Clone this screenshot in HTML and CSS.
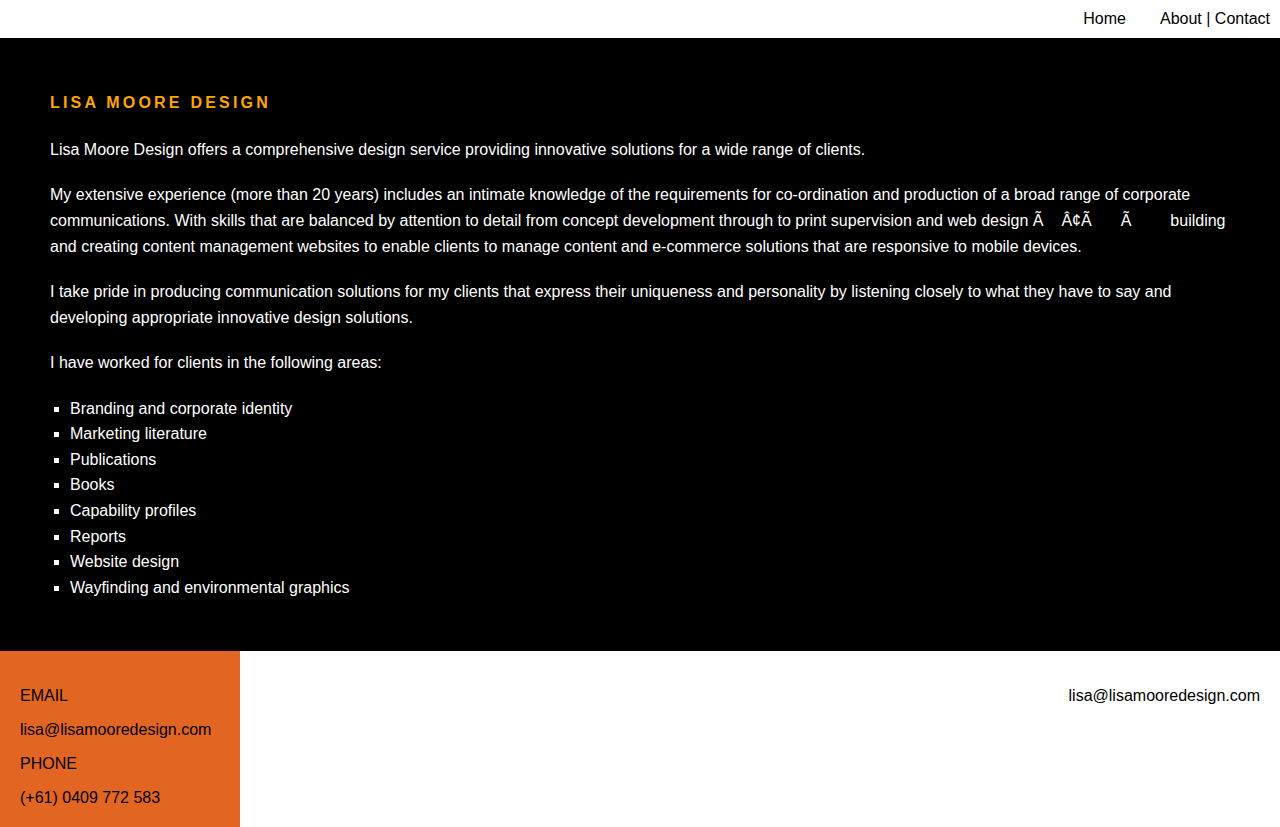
FILE: index.html
```html
<!DOCTYPE html>
<html lang="en">
<head>
<meta charset="utf-8">
<title>Lisa Moore Design</title>
<link rel="stylesheet" href="styles.css">
</head>
<body>
<header class="topbar">
  <nav class="nav">
    <a href="#">Home</a>
    <a href="#">About | Contact</a>
  </nav>
</header>
<main class="about">
  <h1 class="title">LISA MOORE DESIGN</h1>
  <p>Lisa Moore Design offers a comprehensive design service providing innovative solutions for a wide range of clients.</p>
  <p>My extensive experience (more than 20 years) includes an intimate knowledge of the requirements for co-ordination and production of a broad range of corporate communications. With skills that are balanced by attention to detail from concept development through to print supervision and web design Ã<span class="gap g1"></span>Â¢Ã<span class="gap g2"></span>Ã<span class="gap g3"></span>building and creating content management websites to enable clients to manage content and e-commerce solutions that are responsive to mobile devices.</p>
  <p>I take pride in producing communication solutions for my clients that express their uniqueness and personality by listening closely to what they have to say and developing appropriate innovative design solutions.</p>
  <p class="lead">I have worked for clients in the following areas:</p>
  <ul class="areas">
    <li>Branding and corporate identity</li>
    <li>Marketing literature</li>
    <li>Publications</li>
    <li>Books</li>
    <li>Capability profiles</li>
    <li>Reports</li>
    <li>Website design</li>
    <li>Wayfinding and environmental graphics</li>
  </ul>
</main>
<footer class="footer">
  <div class="contact">
    <div>EMAIL</div>
    <div>lisa@lisamooredesign.com</div>
    <div>PHONE</div>
    <div>(+61) 0409 772 583</div>
  </div>
  <div class="footer-email">lisa@lisamooredesign.com</div>
</footer>
</body>
</html>
```
FILE: styles.css
```css
* { box-sizing: border-box; }
html, body { margin: 0; padding: 0; }
body {
  font-family: "Liberation Sans", Arial, sans-serif;
  font-size: 16px;
  color: #000;
  background: #fff;
}
a { color: inherit; text-decoration: none; }

.topbar {
  height: 38px;
  display: flex;
  justify-content: flex-end;
  align-items: center;
  padding-right: 10px;
}
.nav {
  display: flex;
  gap: 34px;
  line-height: 20px;
}

.about {
  background: #000;
  color: #fff;
  padding: 52px 50px 51px;
}
.title {
  margin: 0 0 21px;
  font-size: 16px;
  font-weight: bold;
  letter-spacing: 3.2px;
  color: #ffa500;
  line-height: 25.6px;
}
.about p {
  margin: 0 0 19px;
  line-height: 26px;
}
.about p.lead { margin-bottom: 20px; }
.gap { display: inline-block; }
.g1 { width: 18px; }
.g2 { width: 29px; }
.g3 { width: 39px; }

.areas {
  margin: 0;
  padding-left: 20px;
  list-style: square;
  line-height: 25.6px;
}

.footer {
  display: flex;
  justify-content: space-between;
  align-items: flex-start;
}
.contact {
  width: 240px;
  background: #e26522;
  padding: 33px 20px 17px;
  display: flex;
  flex-direction: column;
  gap: 10px;
  line-height: 24px;
}
.footer-email {
  padding: 33px 20px 0 0;
  line-height: 24px;
}
```
